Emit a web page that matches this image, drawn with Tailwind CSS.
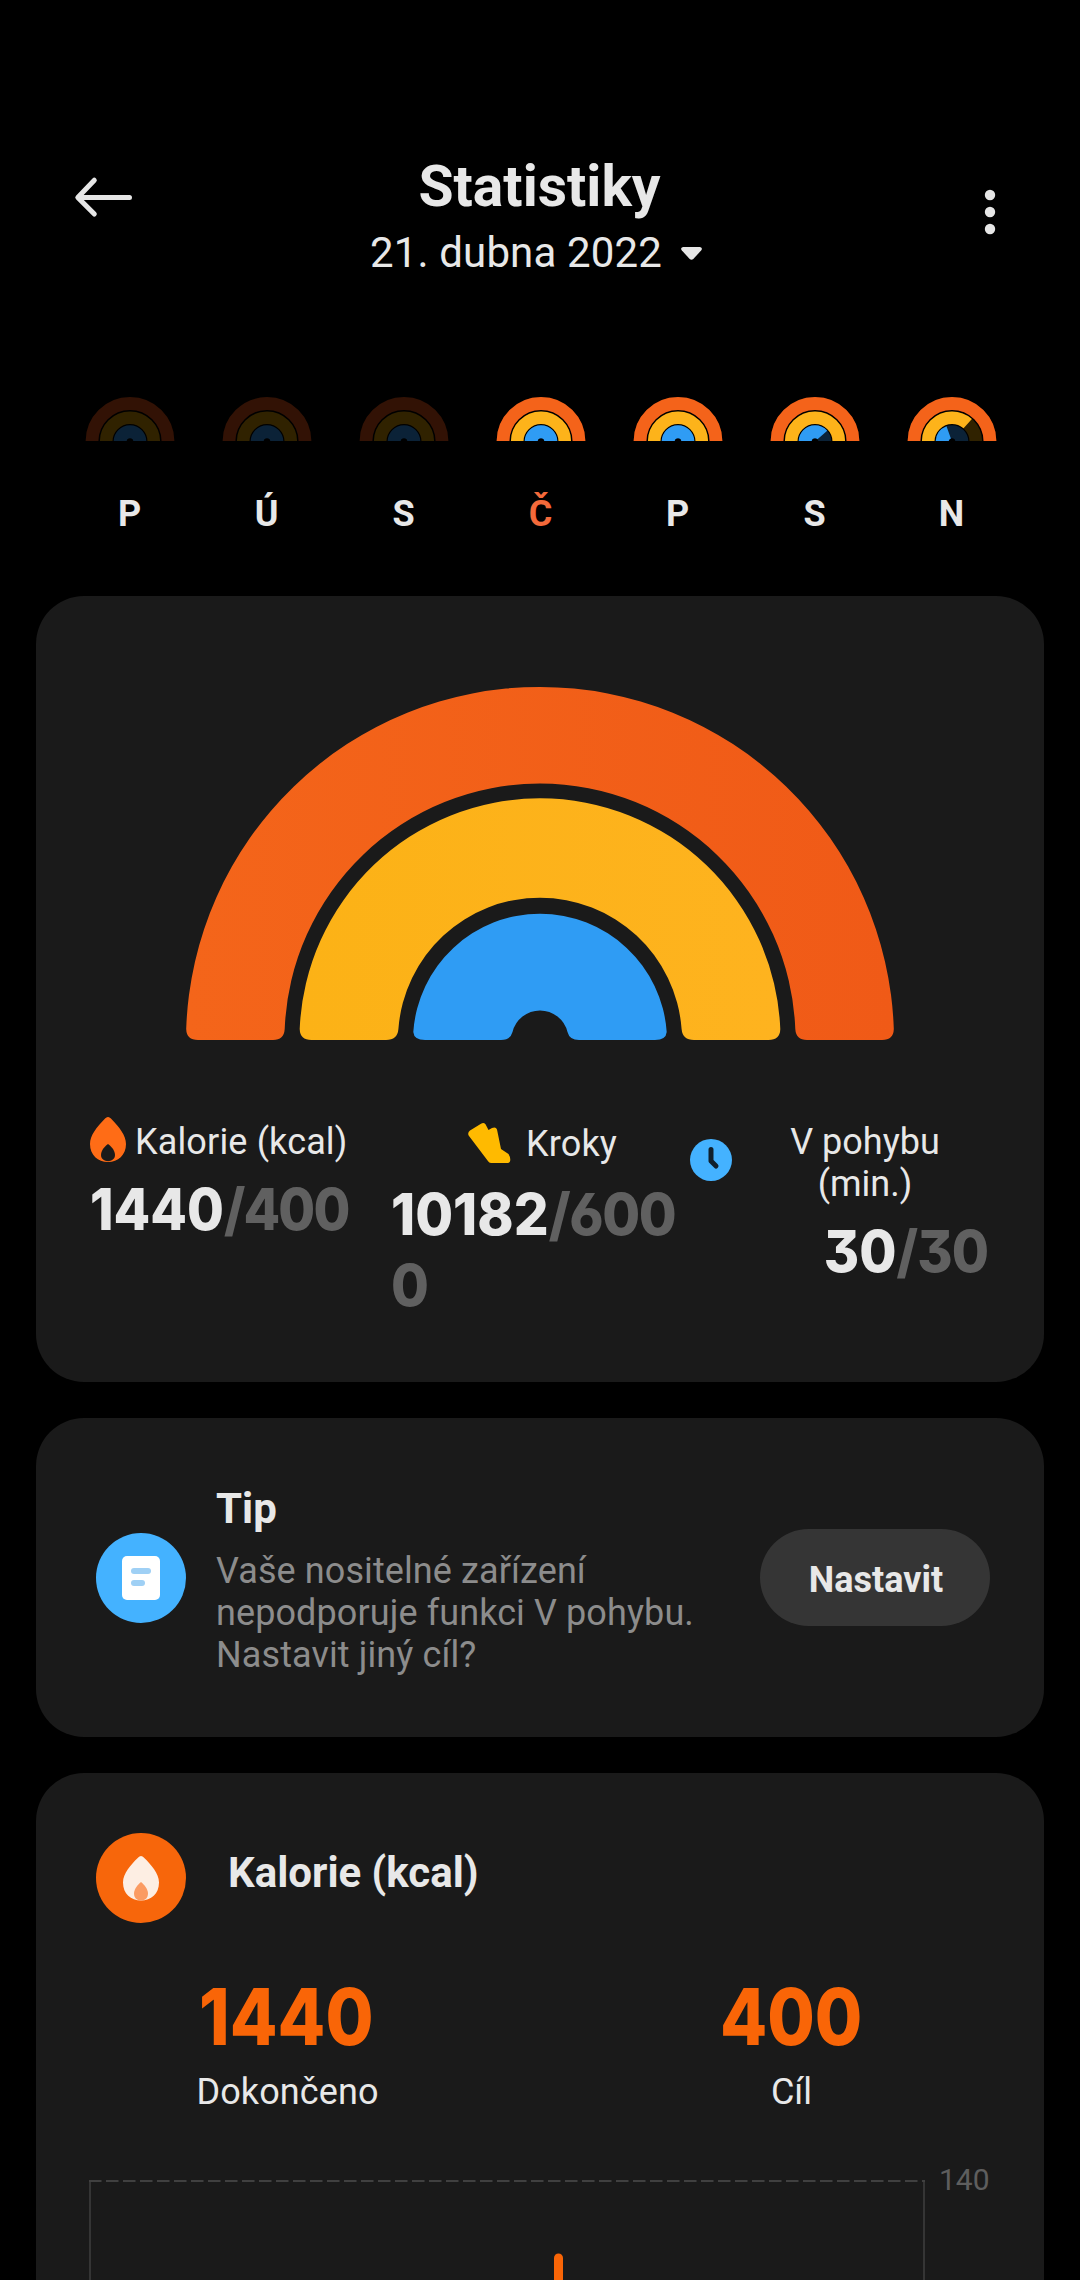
<!DOCTYPE html>
<html lang="cs">
<head>
  <meta charset="UTF-8">
  <meta name="viewport" content="width=device-width, initial-scale=1.0">
  <title>Statistiky</title>
  <script src="https://cdn.jsdelivr.net/npm/@tailwindcss/browser@4"></script>
  <style>
    body { font-family: Roboto, "Noto Sans", sans-serif; }
    .cisla { font-family: Inter, Roboto, sans-serif; font-feature-settings: "cv09", "cv03"; }
  </style>
</head>
<body class="bg-black text-[#e8e8e8] w-[1080px] h-[2280px] overflow-hidden">
  <!-- Hlavička -->
  <header class="grid grid-cols-[120px_1fr_120px] h-[397px] pt-[153px] px-[72px]">
    <svg class="w-[62px] h-[44px] mt-[22px]" viewBox="0 0 62 44" fill="none" stroke="#e6e6e6" stroke-width="5" stroke-linecap="round" stroke-linejoin="round">
      <path d="M57.5 22.4H6M22.3 5.2 5.8 22.4l16.5 16.6"/>
    </svg>
    <div class="flex flex-col items-center">
      <h1 class="text-[57px] leading-[66px] font-bold pt-px pr-px">Statistiky</h1>
      <div class="flex items-center gap-[19px] mt-[8px] -ml-[8px]">
        <span class="text-[42px] leading-[50px] tracking-[0.15px]">21. dubna 2022</span>
        <svg class="w-[21px] h-[13px]" viewBox="0 0 21 13"><path d="M2 0h17q3 1 1.300 3.300l-8 8.700q-1.800 1.500-3.600 0l-8-8.700Q-1 1 2 0z" fill="#e6e6e6"/></svg>
      </div>
    </div>
    <svg class="w-[12px] h-[46px] mt-[36px] justify-self-end mr-[12px]" viewBox="0 0 12 46" fill="#e6e6e6">
      <circle cx="6" cy="6" r="5.200"/><circle cx="6" cy="23" r="5.200"/><circle cx="6" cy="40" r="5.200"/>
    </svg>
  </header>

  <!-- Týden -->
  <div id="tyden" class="grid grid-cols-7 h-[199px] pl-[61px] pr-[60px]"></div>

  <main class="flex flex-col gap-9 px-9">
    <!-- Denní souhrn -->
    <section class="bg-[#1a1a1a] rounded-[48px] h-[786px] pt-[90px] px-[54px]">
      <svg class="w-[708px] h-[354px] mx-auto" viewBox="0 0 708 354">
        <defs>
          <linearGradient id="oranz"><stop stop-color="#f4651a"/><stop offset="1" stop-color="#f05a17"/></linearGradient>
          <linearGradient id="zluta"><stop stop-color="#fcb216"/><stop offset="1" stop-color="#feb31f"/></linearGradient>
        </defs>
        <path fill="url(#oranz)" d="M.2 343A354 354 0 0 1 707.800 343Q707.500 354 696 354H621Q610 354 609.300 343A255.500 255.500 0 0 0 98.700 343Q98 354 87 354H12Q.5 354 .2 343z"/>
        <path fill="url(#zluta)" d="M113.700 343A240.500 240.500 0 0 1 594.300 343Q594 354 582.500 354H508Q496.500 354 495.600 343A142 142 0 0 0 212.400 343Q211.500 354 200 354H125.500Q114 354 113.700 343z"/>
        <path fill="#2f9cf4" d="M227.300 346A127 127 0 0 1 480.700 346Q480 354 469 354H393Q383.500 354 381.500 346A28.300 28.300 0 0 0 326.500 346Q324.500 354 315 354H239Q228 354 227.300 346z"/>
      </svg>

      <div class="grid grid-cols-[301px_285px_1fr] mt-[77px]">
        <div>
          <div class="flex h-[57px]">
            <svg class="w-[36px] h-[45px] mr-[9px]" viewBox="0 0 36 45">
              <path fill="#ff6c16" d="M18 0c1.500 0 2.400 1 3.400 2C29 9.500 36 18.500 36 27c0 11-8 18-18 18S0 38 0 27C0 18.500 7 9.500 14.600 2 15.600 1 16.500 0 18 0z"/>
              <path fill="#1a1a1a" d="M18 27c2.500 1.800 7 6 7 11 0 4-3.500 6.200-7 6.200s-7-2.200-7-6.200c0-5 4.500-9.200 7-11z"/>
            </svg>
            <span class="text-[36px] leading-[42px] pt-[4px] whitespace-nowrap tracking-[0.15px]">Kalorie (kcal)</span>
          </div>
          <p class="cisla text-[58px] leading-[71px] font-extrabold whitespace-nowrap origin-left scale-x-[0.92]">1440<span class="text-[#606060] tracking-[-2px]">/400</span></p>
        </div>
        <div>
          <div class="flex pl-[77px] h-[62px]">
            <svg class="w-[43px] h-[42px] mt-[5px] mr-[15px]" viewBox="0 0 43 42">
              <path fill="#ffba00" d="M2 8.500 13 1.800q2.500-1.800 4.500.4L20.500 8l3.500-2q4-1.500 5 1.500l4 19.500 7.500 5q2.500 4 1.500 7.500-.8 1.500-2.500 1.500H23.500q-2 0-3.200-1.500L1 14Q-1 11 2 8.500z"/>
            </svg>
            <span class="text-[36px] leading-[42px] pt-[6px] tracking-[0.15px]">Kroky</span>
          </div>
          <p class="cisla text-[58px] leading-[71px] font-extrabold whitespace-nowrap origin-left scale-x-[0.945]">10182<span class="text-[#606060] tracking-[-1.5px]">/600<br>0</span></p>
        </div>
        <div>
          <div class="flex pl-[14px] h-[99px]">
            <svg class="w-[42px] h-[42px] mt-[22px]" viewBox="0 0 42 42">
              <circle cx="21" cy="21" r="21" fill="#44b2ff"/>
              <path d="M21 10.500v11.500l5 5" fill="none" stroke="#10202c" stroke-width="5" stroke-linecap="round" stroke-linejoin="round"/>
            </svg>
            <span class="w-[248px] pl-[18px] text-center text-[36px] leading-[42px] pt-[4px]">V pohybu<br>(min.)</span>
          </div>
          <p class="cisla text-[58px] leading-[71px] font-extrabold text-right whitespace-nowrap origin-right scale-x-[0.93] pr-[2px]">30<span class="text-[#606060] tracking-[-1px]">/30</span></p>
        </div>
      </div>
    </section>

    <!-- Tip -->
    <section class="flex items-center bg-[#1a1a1a] rounded-[48px] h-[319px] pl-[60px] pr-[54px]">
      <svg class="w-[90px] h-[90px]" viewBox="0 0 90 90">
        <circle cx="45" cy="45" r="45" fill="#44b2ff"/>
        <rect x="26" y="23" width="38" height="44" rx="5" fill="#fff"/>
        <rect x="35" y="35" width="20" height="6" rx="3" fill="#9fd0f5"/>
        <rect x="35" y="47" width="14" height="6" rx="3" fill="#9fd0f5"/>
      </svg>
      <div class="flex-1 pl-[30px] pt-[5px]">
        <h2 class="text-[42px] leading-[50px] font-bold">Tip</h2>
        <p class="text-[36px] leading-[42px] text-[#8c8c8c] mt-[16px] tracking-[0.1px]">Vaše nositelné zařízení<br>nepodporuje funkci V pohybu.<br>Nastavit jiný cíl?</p>
      </div>
      <button class="w-[230px] h-[97px] rounded-full bg-[#353535] text-[36px] font-bold pt-[5px] pl-[2px]">Nastavit</button>
    </section>

    <!-- Kalorie -->
    <section class="bg-[#1a1a1a] rounded-t-[48px] h-[600px] pt-[60px]">
      <div class="flex items-center pl-[60px] gap-[42px]">
        <svg class="w-[90px] h-[90px]" viewBox="0 0 90 90">
          <circle cx="45" cy="45" r="45" fill="#f7660b"/>
          <path fill="#fdeee3" d="M45 23c1 0 2 .8 3 1.800C55 31.500 63 40.500 63 49.500 63 61 55 67.500 45 67.500S27 61 27 49.500C27 40.500 35 31.500 42 24.800c1-1 2-1.800 3-1.800z"/>
          <path fill="#fb9b62" d="M45 49c3 2.500 7 7 7 11.500 0 4.500-3 7-7 7s-7-2.500-7-7C38 56 42 51.500 45 49z"/>
        </svg>
        <h2 class="text-[42px] leading-[50px] font-bold pb-[10px]">Kalorie (kcal)</h2>
      </div>
      <div class="grid grid-cols-2 text-center mt-[45px]">
        <div>
          <p class="cisla text-[79px] leading-[96px] font-extrabold text-[#f96507] scale-x-[0.88] pr-[4px]">1440</p>
          <p class="text-[36px] leading-[42px] mt-[7px] pr-px tracking-[0.1px]">Dokončeno</p>
        </div>
        <div>
          <p class="cisla text-[79px] leading-[96px] font-extrabold text-[#f96507] scale-x-[0.87] pr-[2px]">400</p>
          <p class="text-[36px] leading-[42px] mt-[7px] pr-px">Cíl</p>
        </div>
      </div>
      <div class="flex pl-[53px] mt-[41px]">
        <svg class="w-[836px] h-[120px] mt-[26px]" viewBox="0 0 836 120" fill="none">
          <path d="M1 1v119M835 1v119" stroke="#353535" stroke-width="2"/>
          <path d="M0 1h836" stroke="#404040" stroke-width="2" stroke-dasharray="12.500 4.500"/>
          <path d="M469.500 120V78" stroke="#f96507" stroke-width="9" stroke-linecap="round"/>
        </svg>
        <span class="text-[30px] leading-[36px] text-[#5e5e5e] pl-[14px] pt-[8px]">140</span>
      </div>
    </section>
  </main>

  <script>
    // splněno v procentech: kalorie, kroky, pohyb
    const dny = [
      { den: 'P', data: [0, 0, 0] },
      { den: 'Ú', data: [0, 0, 0] },
      { den: 'S', data: [0, 0, 0] },
      { den: 'Č', data: [100, 100, 100], vybrano: true },
      { den: 'P', data: [100, 100, 100] },
      { den: 'S', data: [100, 100, 77] },
      { den: 'N', data: [100, 73, 39] }
    ];
    const oblouky = [
      { r: 38, w: 12.8, barva: '#f4631a', tmava: '#321205' },
      { r: 23.8, w: 12.6, barva: '#fdb31a', tmava: '#302200' },
      { r: 9.8, w: 13, barva: '#2f9cf4', tmava: '#0b2237' }
    ];

    document.getElementById('tyden').innerHTML = dny.map(d => `
      <div class="flex flex-col items-center">
        <svg class="w-[90px] h-[44px]" viewBox="0 0 90 44" fill="none">
          ${oblouky.map((o, i) => {
            const p = `M${45 - o.r} 44.500a${o.r} ${o.r} 0 0 1 ${o.r * 2} 0`;
            return `<path d="${p}" stroke="${o.tmava}" stroke-width="${o.w}"/>` +
              (d.data[i] ? `<path d="${p}" stroke="${o.barva}" stroke-width="${o.w}" pathLength="100" stroke-dasharray="${d.data[i]} 200"/>` : '');
          }).join('')}
        </svg>
        <span class="text-[36px] leading-[42px] font-bold mt-[52px] ${d.vybrano ? 'text-[#f4693a]' : 'text-[#e8e8e8]'}">${d.den}</span>
      </div>`).join('');
  </script>
</body>
</html>
